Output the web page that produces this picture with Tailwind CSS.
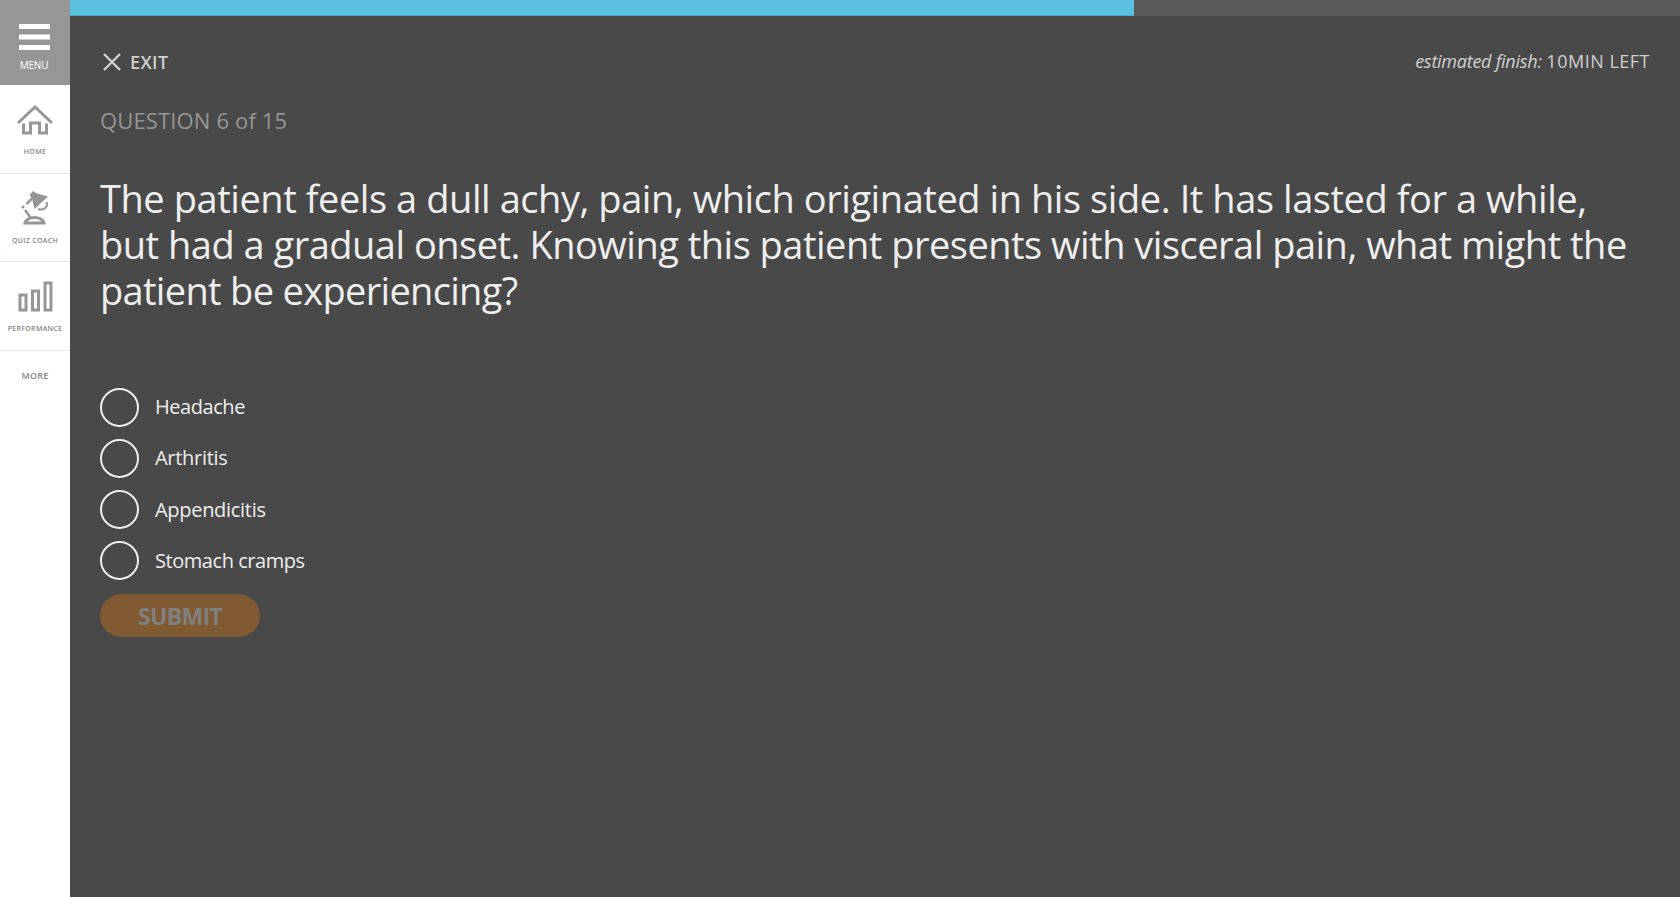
<!DOCTYPE html>
<html lang="en">
<head>
<meta charset="utf-8">
<title>Quiz Coach</title>
<script src="https://cdn.jsdelivr.net/npm/@tailwindcss/browser@4"></script>
</head>
<body class="flex h-screen overflow-hidden bg-[#494949] font-['Open_Sans',sans-serif]">
<nav class="flex w-[70px] shrink-0 flex-col bg-white text-[#858585]">
  <button class="flex h-[85px] flex-col items-center bg-[#969696] pt-6 text-white">
    <svg class="-ml-0.5 h-[26px] w-[31px]" viewBox="0 0 31 26" fill="currentColor"><path d="M0 0h31v5H0zM0 10.500h31v5H0zM0 21h31v5H0z"/></svg>
    <span class="mt-[9px] -ml-0.5 text-[10px] leading-[12px] tracking-[-0.2px]">MENU</span>
  </button>
  <a class="flex h-[89px] flex-col items-center border-b border-[#e8e8e8] pt-5">
    <svg class="h-[31px] w-[36px]" viewBox="0 0 36 31" fill="none" stroke="#969696" stroke-width="3"><path d="M1 18 18 2 35 18M6.500 18.500v9.500h7V18h9v10h7v-9.500"/></svg>
    <span class="mt-[10px] text-[7px] leading-[12px] font-semibold tracking-[0.4px]">HOME</span>
  </a>
  <a class="flex h-[88px] flex-col items-center border-b border-[#e8e8e8] pt-4">
    <svg class="h-[36px] w-[30px]" viewBox="0 0 30 36"><path d="M9.500 5 13 1l4 2.500L28 6.500 14.500 19 12 8.500z" fill="#969696"/><g fill="none" stroke="#969696" stroke-width="2.500"><path d="M6.500 14 12 8.500"/><path d="M5 20l6 8"/><path d="M26.500 12c2 5-3 9-8.500 7" stroke-width="2"/><path d="M5 33c2-7.500 17-7.500 19 0z" stroke-width="3"/></g><circle cx="3" cy="17" r="1.500" fill="#969696"/></svg>
    <span class="mt-[9px] text-[7px] leading-[12px] font-semibold tracking-[0.3px]">QUIZ COACH</span>
  </a>
  <a class="flex h-[89px] flex-col items-center border-b border-[#e8e8e8] pt-[19px]">
    <svg class="h-[31px] w-[35px]" viewBox="0 0 35 31" fill="none" stroke="#969696" stroke-width="3"><path d="M2 14h6v15H2zM14.500 10h6v19h-6zM27 2h6v27h-6z"/></svg>
    <span class="mt-[11px] text-[7px] leading-[12px] font-semibold tracking-[0.3px]">PERFORMANCE</span>
  </a>
  <a class="pt-[18px] text-center text-[9px] leading-[14px] font-semibold tracking-[0.2px]">MORE</a>
</nav>
<main class="flex min-w-0 flex-1 flex-col">
  <div class="h-4 shrink-0 bg-[#58595b]"><div class="h-4 w-[1064px] border-b border-[#46a8c6] bg-[#5bc0de]"></div></div>
  <div class="flex flex-col px-[30px]">
    <header class="mt-[34px] flex h-6 items-center justify-between text-[#d0d0d0]">
      <button class="flex items-center pl-[3px]"><svg class="mr-[9px] h-[18px] w-[18px]" viewBox="0 0 18 18" stroke="currentColor" stroke-width="2.400"><path d="M1 1 17 17M17 1 1 17"/></svg><span class="text-[18px] leading-6 font-semibold tracking-[0.4px]">EXIT</span></button>
      <p class="-mt-0.5 text-[18px] leading-6"><i class="tracking-[-0.25px]">estimated finish:</i> <span class="tracking-[0.5px]">10MIN LEFT</span></p>
    </header>
    <p class="mt-[31px] text-[22px] leading-[30px] tracking-[0.15px] text-[#969696]">QUESTION 6 of 15</p>
    <h1 class="mt-10 text-[38px] leading-[46px] whitespace-nowrap text-[#eee]"><span class="block tracking-[-0.44px]">The patient feels a dull achy, pain, which originated in his side. It has lasted for a while,</span><span class="block tracking-[-0.5px]">but had a gradual onset. Knowing this patient presents with visceral pain, what might the</span><span class="block tracking-[-0.68px]">patient be experiencing?</span></h1>
    <div class="mt-[75px] flex flex-col gap-3 text-[20px] text-[#eee]">
      <label class="flex h-[39px] items-center"><i class="mr-4 size-[39px] rounded-full border-2 border-[#eee]"></i><span class="-mt-0.5 tracking-[-0.45px]">Headache</span></label>
      <label class="flex h-[39px] items-center"><i class="mr-4 size-[39px] rounded-full border-2 border-[#eee]"></i><span class="-mt-0.5 tracking-[-0.3px]">Arthritis</span></label>
      <label class="flex h-[39px] items-center"><i class="mr-4 size-[39px] rounded-full border-2 border-[#eee]"></i><span class="tracking-[-0.3px]">Appendicitis</span></label>
      <label class="flex h-[39px] items-center"><i class="mr-4 size-[39px] rounded-full border-2 border-[#eee]"></i><span class="tracking-[-0.45px]">Stomach cramps</span></label>
    </div>
    <button class="mt-[14px] h-[43px] w-40 rounded-full bg-[#805a33] pt-0.5 text-[23px] font-bold tracking-[-0.7px] text-[#808080]"><span>SUBMIT</span></button>
  </div>
</main>
</body>
</html>
